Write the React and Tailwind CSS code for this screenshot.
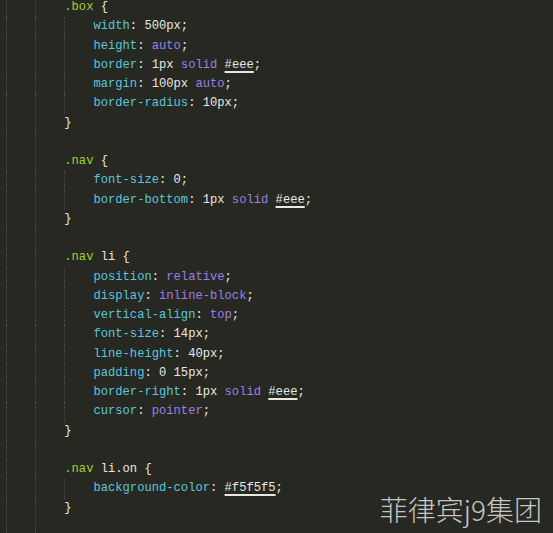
import React from 'react';

const C = {
  sel: 'text-[#a0cd2c]',
  br: 'text-[#e8e8e0]',
  prop: 'text-[#5ac6dc]',
  p: 'text-[#e8e8e0]',
  kw: 'text-[#9d7fe2]',
};

// [indent, tokens]
const lines = [
  [0, [['sel', '.box'], ['p', ' '], ['br', '{']]],
  [1, [['prop', 'width'], ['p', ': 500px;']]],
  [1, [['prop', 'height'], ['p', ': '], ['kw', 'auto'], ['p', ';']]],
  [1, [['prop', 'border'], ['p', ': 1px '], ['kw', 'solid'], ['p', ' '], ['hex', '#eee'], ['p', ';']]],
  [1, [['prop', 'margin'], ['p', ': 100px '], ['kw', 'auto'], ['p', ';']]],
  [1, [['prop', 'border-radius'], ['p', ': 10px;']]],
  [0, [['br', '}']]],
  [-1, []],
  [0, [['sel', '.nav'], ['p', ' '], ['br', '{']]],
  [1, [['prop', 'font-size'], ['p', ': 0;']]],
  [1, [['prop', 'border-bottom'], ['p', ': 1px '], ['kw', 'solid'], ['p', ' '], ['hex', '#eee'], ['p', ';']]],
  [0, [['br', '}']]],
  [-1, []],
  [0, [['sel', '.nav'], ['p', ' li '], ['br', '{']]],
  [1, [['prop', 'position'], ['p', ': '], ['kw', 'relative'], ['p', ';']]],
  [1, [['prop', 'display'], ['p', ': '], ['kw', 'inline-block'], ['p', ';']]],
  [1, [['prop', 'vertical-align'], ['p', ': '], ['kw', 'top'], ['p', ';']]],
  [1, [['prop', 'font-size'], ['p', ': 14px;']]],
  [1, [['prop', 'line-height'], ['p', ': 40px;']]],
  [1, [['prop', 'padding'], ['p', ': 0 15px;']]],
  [1, [['prop', 'border-right'], ['p', ': 1px '], ['kw', 'solid'], ['p', ' '], ['hex', '#eee'], ['p', ';']]],
  [1, [['prop', 'cursor'], ['p', ': '], ['kw', 'pointer'], ['p', ';']]],
  [0, [['br', '}']]],
  [-1, []],
  [0, [['sel', '.nav'], ['p', ' li.on '], ['br', '{']]],
  [1, [['prop', 'background-color'], ['p', ': '], ['hex', '#f5f5f5'], ['p', ';']]],
  [0, [['br', '}']]],
  [-1, []],
];

const Guide = ({ on = true }) => (
  <span className={'shrink-0 w-[4ch] h-full ' + (on ? 'border-l border-dotted border-[#4e4f48]' : '')} />
);

const Token = ({ type, text }) => {
  if (type === 'hex') {
    return (
      <span className="text-[#e8e8e0] underline decoration-[#e8e8e0] decoration-[1.5px] underline-offset-[3px]">
        {text}
      </span>
    );
  }
  return <span className={C[type]}>{text}</span>;
};

export default function App() {
  return (
    <div className="relative h-[533px] w-full overflow-hidden bg-[#272822]">
      <div
        className="flex flex-col pl-[6px] mt-[-2px] text-[12.15px] whitespace-pre"
        style={{ fontFamily: '"Liberation Mono", "DejaVu Sans Mono", monospace' }}
      >
        {lines.map(([indent, tokens], i) => (
          <div key={i} className="flex items-center h-[19.25px] leading-[19.25px]">
            <Guide />
            <Guide />
            {indent === 1 && <Guide />}
            {tokens.map(([t, s], j) => (
              <Token key={j} type={t} text={s} />
            ))}
          </div>
        ))}
      </div>
      <div
        className="absolute right-[11px] bottom-[10px] text-[28px] leading-none font-light text-[#c6c6c2]"
        style={{ fontFamily: '"Noto Sans CJK SC", "Noto Sans", sans-serif' }}
      >
        菲律宾j9集团
      </div>
    </div>
  );
}
